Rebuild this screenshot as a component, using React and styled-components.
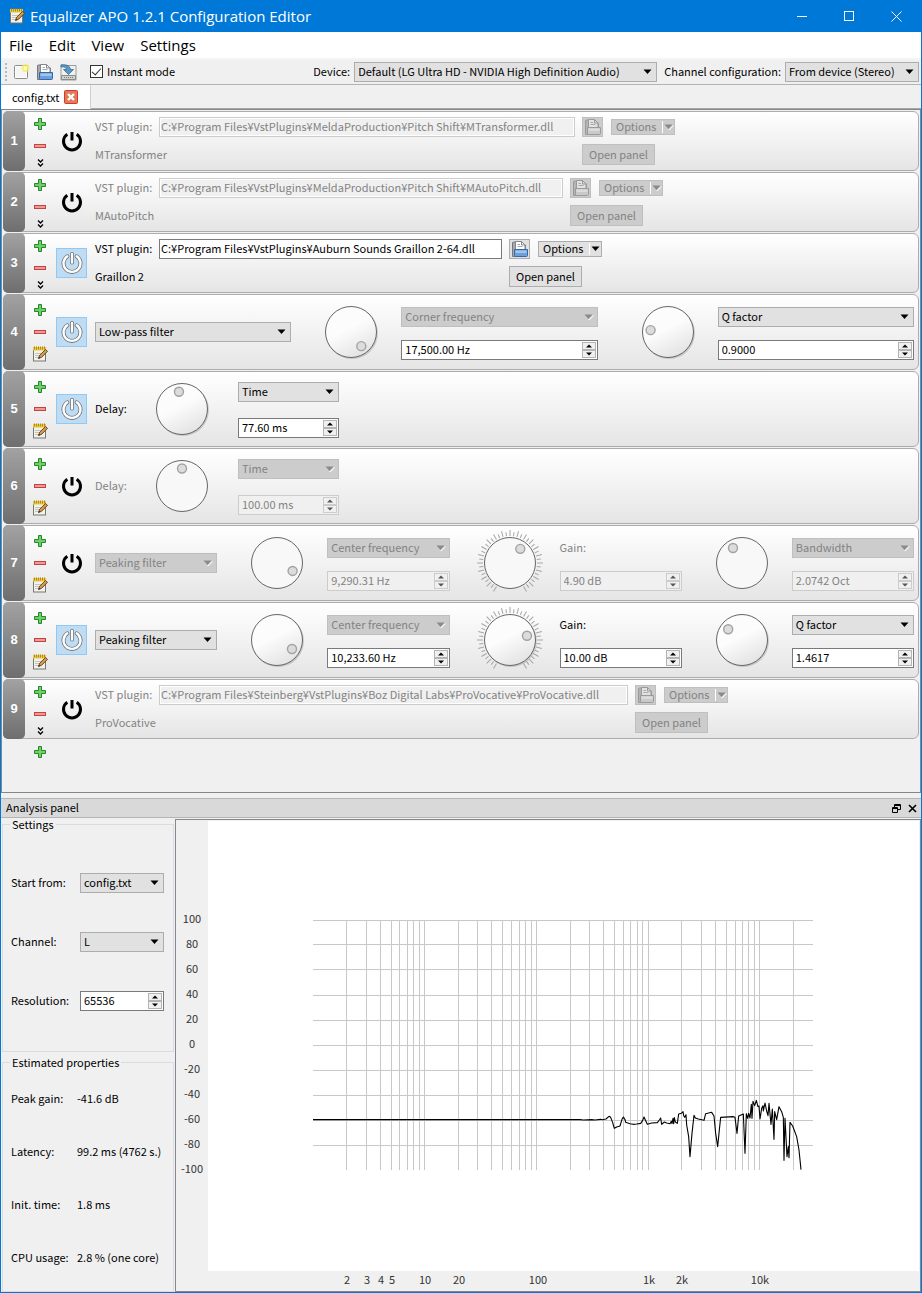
import { useId } from "react";
import styled, { createGlobalStyle } from "styled-components";

const filters = [
  { id: 1, type: "vst", path: "C:¥Program Files¥VstPlugins¥MeldaProduction¥Pitch Shift¥MTransformer.dll", name: "MTransformer", width: 416 },
  { id: 2, type: "vst", path: "C:¥Program Files¥VstPlugins¥MeldaProduction¥Pitch Shift¥MAutoPitch.dll", name: "MAutoPitch", width: 404 },
  { id: 3, type: "vst", path: "C:¥Program Files¥VstPlugins¥Auburn Sounds Graillon 2-64.dll", name: "Graillon 2", width: 343, on: true },
  {
    id: 4, type: "biquad", filter: "Low-pass filter", on: true,
    params: [
      { angle: 144, mode: "Corner frequency", modeOff: true, value: "17,500.00 Hz" },
      { angle: -84, mode: "Q factor", value: "0.9000", wide: true },
    ],
  },
  { id: 5, type: "delay", angle: -10, value: "77.60 ms", on: true },
  { id: 6, type: "delay", angle: 0, value: "100.00 ms" },
  {
    id: 7, type: "biquad", filter: "Peaking filter",
    params: [
      { angle: 117, mode: "Center frequency", value: "9,290.31 Hz" },
      { angle: 36, label: "Gain:", value: "4.90 dB", ticks: true },
      { angle: -31, mode: "Bandwidth", value: "2.0742 Oct" },
    ],
  },
  {
    id: 8, type: "biquad", filter: "Peaking filter", on: true,
    params: [
      { angle: 121, mode: "Center frequency", modeOff: true, value: "10,233.60 Hz" },
      { angle: 76, label: "Gain:", value: "10.00 dB", ticks: true },
      { angle: -52, mode: "Q factor", value: "1.4617" },
    ],
  },
  { id: 9, type: "vst", path: "C:¥Program Files¥Steinberg¥VstPlugins¥Boz Digital Labs¥ProVocative¥ProVocative.dll", name: "ProVocative", width: 469 },
];

const properties = [
  ["Peak gain:", "-41.6 dB"],
  ["Latency:", "99.2 ms (4762 s.)"],
  ["Init. time:", "1.8 ms"],
  ["CPU usage:", "2.8 % (one core)"],
];

/* icons */

const NotepadIcon = () => (
  <svg width="16" height="16" viewBox="0 0 16 16">
    <rect x="1.5" y="2.5" width="12" height="12.5" fill="#f1f1ee" stroke="#77776f" />
    <path d="M3 7.5h7M3 9.5h6M3 11.5h5" stroke="#c4c4bf" />
    <rect x="1" y="1" width="13" height="3.5" fill="#ecca45" />
    <path d="M2.5 0.5v3M4.5 0.5v3M6.5 0.5v3M8.5 0.5v3M10.5 0.5v3M12.5 0.5v3" stroke="#b5891a" />
    <path d="M6.500 12.500l1.200-3.300 5.800-5.700 2 1.800-5.800 5.900z" fill="#d89a4c" stroke="#5c3a12" strokeWidth="0.900" />
    <path d="M6.500 12.500l0.500-1.600 1.200 1z" fill="#222" />
  </svg>
);

const NewIcon = () => (
  <svg width="17" height="16" viewBox="0 0 17 16">
    <rect x="1.5" y="1.500" width="13" height="13" rx="1" fill="#f5f5f5" stroke="#8c8c8a" />
    <path d="M2.500 2.500h11v11h-11z" fill="none" stroke="#fff" />
    <circle cx="12.500" cy="4" r="4" fill="#f6ee5c" opacity="0.75" />
    <circle cx="12.500" cy="4" r="2" fill="#fdfbb0" />
  </svg>
);

const OpenIcon = ({ off }) => (
  <svg width="18" height="18" viewBox="0 0 18 18">
    <path d="M1.500 16.500V3q0-1 1-1h3v3h9v11.500z" fill={off ? "#b4b4b4" : "#a6a9ad"} stroke={off ? "#9a9a9a" : "#74787c"} />
    <path d="M4.500 11V1.500h6l3.500 3.500V11z" fill={off ? "#e2e2e2" : "#fff"} stroke={off ? "#999" : "#85878a"} />
    <path d="M10.500 1.500V5H14" fill="none" stroke={off ? "#999" : "#85878a"} />
    <path d="M6.500 4.500h2.500M6.500 6.500h5" stroke="#a9a9a9" />
    <path d="M3.500 9.500h13v6q0 1-1 1h-11q-1 0-1-1z" fill={off ? "#c9c9c9" : "#6d9fdb"} stroke={off ? "#9a9a9a" : "#3568a8"} />
    <path d="M4.500 10.500h11v2.500h-11z" fill={off ? "#dcdcdc" : "#a3c5ec"} />
  </svg>
);

const SaveIcon = () => (
  <svg width="17" height="17" viewBox="0 0 17 17">
    <path d="M1 1.500h15v14.500H1z" fill="#f0f1ef" stroke="#9a9d9a" />
    <path d="M1.500 11.500h14v4h-14z" fill="#cfd1cd" stroke="#8a8d89" />
    <path d="M4 13.500h10" stroke="#7c7f7b" strokeDasharray="1 1" />
    <path d="M1 0.800C6 0.300 10 1.500 10.500 5.500h3L8.500 10.500 3.500 5.500H6.500C6 3.500 4.500 2.500 1 3z" fill="#5b97c2" stroke="#2a618e" strokeWidth="0.700" />
  </svg>
);

const PlusIcon = () => (
  <svg width="12" height="12" viewBox="0 0 12 12">
    <path d="M4.500 0.500h3v4h4v3h-4v4h-3v-4h-4v-3h4z" fill="#6fd06a" stroke="#27862a" />
  </svg>
);

const MinusIcon = () => (
  <svg width="12" height="4" viewBox="0 0 12 4">
    <rect x="0.500" y="0.500" width="11" height="3" fill="#f09a94" stroke="#c2433f" />
  </svg>
);

const ChevronsIcon = () => (
  <svg width="7" height="8" viewBox="0 0 7 8">
    <path d="M1 0.500l2.500 2.500L6 0.500M1 4.500l2.500 2.500L6 4.500" fill="none" stroke="#000" strokeWidth="1.300" />
  </svg>
);

const PowerIcon = ({ on }) => {
  const d = "M6.300 4.300a8.500 8.500 0 1 0 9.400 0M11 2v8.500";
  return (
    <svg width="22" height="22" viewBox="0 0 22 22" fill="none" strokeLinecap={on ? "round" : "butt"}>
      <path d={d} stroke={on ? "#6b7178" : "#000"} strokeWidth={on ? 4 : 3} />
      {on && <path d={d} stroke="#fff" strokeWidth="2.400" />}
    </svg>
  );
};

const CloseTabIcon = () => (
  <svg width="14" height="14" viewBox="0 0 14 14">
    <rect x="0.500" y="0.500" width="13" height="13" rx="1" fill="#e07b5a" stroke="#d4372b" />
    <path d="M4 4l6 6M10 4l-6 6" stroke="#fff" strokeWidth="2.400" />
  </svg>
);

const Arrow = ({ off }) => (
  <svg width="10" height="6" viewBox="0 0 10 6">
    {off && <path d="M4 6h1.500l4-4v-1z" fill="#fff" />}
    <path d="M0.500 0.500h8l-4 4.500z" fill={off ? "#8a8a8a" : "#000"} />
  </svg>
);

/* controls */

const Combo = ({ value, label, disabled, width, id }) => (
  <ComboBox $width={width}>
    <ComboSelect id={id} aria-label={label} disabled={disabled} defaultValue={value}>
      <option>{value}</option>
    </ComboSelect>
    <Arrow off={disabled} />
  </ComboBox>
);

const Spin = ({ value, label, disabled, id }) => (
  <SpinBox $off={disabled}>
    <SpinInput id={id} aria-label={label} defaultValue={value} disabled={disabled} />
    <SpinButtons>
      <SpinButton aria-label="Increase" disabled={disabled}>
        <svg width="6" height="4" viewBox="0 0 6 4"><path d="M0 3.500h6L3 0.500z" fill="currentColor" /></svg>
      </SpinButton>
      <SpinButton aria-label="Decrease" disabled={disabled}>
        <svg width="6" height="4" viewBox="0 0 6 4"><path d="M0 0.500h6L3 3.500z" fill="currentColor" /></svg>
      </SpinButton>
    </SpinButtons>
  </SpinBox>
);

const Dial = ({ angle, ticks, disabled, label, wide }) => {
  const gradient = useId();
  const rad = (angle * Math.PI) / 180;
  const marks = [];
  if (ticks) for (let a = -150; a <= 150; a += 7.5) marks.push(a);

  return (
    <DialBox $wide={wide}>
      <svg width="70" height="70" viewBox="0 0 70 70">
        <linearGradient id={gradient} x1="0.200" y1="0" x2="0.700" y2="1">
          <stop offset="0.450" stopColor="#fcfcfc" />
          <stop offset="1" stopColor="#e2e2e2" />
        </linearGradient>
        {marks.map((a, i) => (
          <path key={a} d={i % 2 ? "M35 4v4" : "M35 2v6"} stroke="#a6a6a6" transform={`rotate(${a} 35 35)`} />
        ))}
        {!disabled && <circle cx="36" cy="36" r="26" fill="#000" opacity="0.150" />}
        <circle cx="35" cy="35" r="25.500" fill={disabled ? "#f8f8f8" : `url(#${gradient})`} stroke="#666" />
        <circle
          cx={35 + 17.5 * Math.sin(rad)}
          cy={35 - 17.5 * Math.cos(rad)}
          r="4.500"
          fill="#dcdcdc"
          stroke="#a2a2a2"
          strokeWidth="1.400"
        />
      </svg>
      <DialRange type="range" min="-150" max="150" defaultValue={angle} aria-label={label} disabled={disabled} />
    </DialBox>
  );
};

/* filter rows */

const VstFilter = ({ path, name, width, on, id }) => (
  <VstGrid $off={!on}>
    <label htmlFor={`path-${id}`}>VST plugin:</label>
    <PathInput id={`path-${id}`} defaultValue={path} disabled={!on} $width={width} />
    <VstButtons>
      <FileButton aria-label="Open file" disabled={!on}><OpenIcon off={!on} /></FileButton>
      <OptionsButton disabled={!on}>
        <OptionsText>Options</OptionsText>
        <Divider />
        <Arrow off={!on} />
      </OptionsButton>
    </VstButtons>
    <PluginName>{name}</PluginName>
    <PanelButton disabled={!on}>Open panel</PanelButton>
  </VstGrid>
);

const BiquadFilter = ({ filter, params, on }) => (
  <>
    <Combo value={filter} label="Filter type" disabled={!on} />
    {params.map((p) => (
      <Param key={p.mode || p.label}>
        <Dial angle={p.angle} ticks={p.ticks} wide={p.wide} disabled={!on} label={p.mode || p.label} />
        <ParamFields>
          {p.label
            ? <ParamLabel $off={!on}>{p.label}</ParamLabel>
            : <Combo value={p.mode} label="Parameter" disabled={!on || p.modeOff} />}
          <Spin value={p.value} label={p.mode || p.label} disabled={!on} />
        </ParamFields>
      </Param>
    ))}
  </>
);

const DelayFilter = ({ angle, value, on }) => (
  <>
    <DelayLabel $off={!on}>Delay:</DelayLabel>
    <Dial angle={angle} disabled={!on} label="Delay" />
    <DelayFields>
      <Combo value="Time" label="Unit" disabled={!on} />
      <Spin value={value} label="Delay" disabled={!on} />
    </DelayFields>
  </>
);

const views = { vst: VstFilter, biquad: BiquadFilter, delay: DelayFilter };

const FilterRow = (props) => {
  const View = views[props.type];
  const tall = props.type !== "vst";

  return <Row $tall={tall}>
    <RowNumber>{props.id}</RowNumber>
    <RowTools $tall={tall}>
      <IconButton aria-label="Add filter"><PlusIcon /></IconButton>
      <IconButton aria-label="Remove filter"><MinusIcon /></IconButton>
      <IconButton aria-label={tall ? "Edit text" : "Expand"}>
        {tall ? <NotepadIcon /> : <ChevronsIcon />}
      </IconButton>
    </RowTools>
    <PowerButton aria-label="Power" aria-pressed={!!props.on} $on={props.on}>
      <PowerIcon on={props.on} />
    </PowerButton>
    <RowBody><View {...props} /></RowBody>
  </Row>
};

/* analysis graph */

const gridX = [];
for (let decade = 1; decade <= 10000; decade *= 10) {
  for (let n = 1; n < 10; n++) {
    const f = n * decade;
    if (f > 1 && f <= 20000) gridX.push(Math.floor(136 + 111.7 * Math.log10(f)));
  }
}
const gridY = [99, 123, 148, 174, 199, 224, 249, 274, 299, 324];
const dbLabels = [100, 80, 60, 40, 20, 0, -20, -40, -60, -80, -100];
const hzLabels = [
  [170, "2"], [190, "3"], [204, "4"], [215, "5"], [248, "10"], [282, "20"],
  [361, "100"], [472, "1k"], [505, "2k"], [583, "10k"],
];

const response = "-771,119 30,119 40,120 65,119 75,120 92,118 97,119 108,117 117,109 122,112 128,128 133,145 140,141 150,138 156,118 160,111 165,119 167,127 180,131 190,133 200,132 212,130 218,121 222,111 226,120 232,133 245,129 262,128 268,120 272,114 275,133 283,126 290,129 300,131 304,124 306,131 309,115 311,131 313,113 316,126 322,130 326,102 334,100 339,95 341,107 344,112 348,104 350,135 356,170 360,230 366,160 372,106 376,114 385,117 402,121 407,101 425,97 432,108 437,160 443,200 448,150 452,112 490,110 495,112 501,160 506,108 515,104 520,102 525,220 529,101 533,115 536,100 540,114 544,73 546,115 549,64 554,77 559,61 564,80 567,78 570,117 575,85 579,77 580,93 585,69 590,93 594,107 597,70 603,133 607,87 612,178 614,95 620,119 627,80 635,95 640,112 642,241 645,115 651,230 655,200 657,233 660,127 668,138 680,170 687,210 693,269";

const Graph = () => (
  <GraphView>
    <GraphSvg role="img" aria-label="Frequency response">
      <g stroke="#c8c8c8" shapeRendering="crispEdges">
        {gridX.map((x) => <path key={x} d={`M${x + 0.5} 99V349`} />)}
        {gridY.map((y) => <path key={y} d={`M136 ${y + 0.5}H636`} />)}
      </g>
      <g transform="translate(393 259) scale(0.33333)">
        <polyline points={response} fill="none" stroke="#000" strokeWidth="3.300" strokeLinejoin="round" />
      </g>
      {dbLabels.map((db, i) => (
        <text key={db} x="15" y={102 + i * 25} textAnchor="middle">{db}</text>
      ))}
      {hzLabels.map(([x, text]) => (
        <text key={text} x={x} y="463" textAnchor="middle">{text}</text>
      ))}
    </GraphSvg>
  </GraphView>
);

export default function App() {
  return <Window>
    <GlobalStyle />
    <TitleBar>
      <NotepadIcon />
      <Title>Equalizer APO 1.2.1 Configuration Editor</Title>
      <WindowButton aria-label="Minimize">
        <svg width="11" height="11"><path d="M0 5.500h10" stroke="#fff" /></svg>
      </WindowButton>
      <WindowButton aria-label="Maximize">
        <svg width="11" height="11"><rect x="0.500" y="0.500" width="9" height="9" fill="none" stroke="#fff" /></svg>
      </WindowButton>
      <WindowButton aria-label="Close">
        <svg width="11" height="11"><path d="M0.500 0.500l10 10M10.500 0.500l-10 10" stroke="#fff" /></svg>
      </WindowButton>
    </TitleBar>

    <MenuBar>
      <MenuItem>File</MenuItem>
      <MenuItem>Edit</MenuItem>
      <MenuItem>View</MenuItem>
      <MenuItem>Settings</MenuItem>
    </MenuBar>

    <ToolBar>
      <Grip />
      <IconButton aria-label="New"><NewIcon /></IconButton>
      <IconButton aria-label="Open"><OpenIcon /></IconButton>
      <IconButton aria-label="Save"><SaveIcon /></IconButton>
      <CheckLabel>
        <CheckBox type="checkbox" defaultChecked />
        Instant mode
      </CheckLabel>
      <ToolLabel htmlFor="device">Device:</ToolLabel>
      <Combo id="device" width={303} value="Default (LG Ultra HD - NVIDIA High Definition Audio)" />
      <ToolLabel htmlFor="channels">Channel configuration:</ToolLabel>
      <Combo id="channels" width={134} value="From device (Stereo)" />
    </ToolBar>

    <TabBar>
      <Tab>
        config.txt
        <IconButton aria-label="Close tab"><CloseTabIcon /></IconButton>
      </Tab>
      <TabFill />
    </TabBar>

    <FilterList>
      {filters.map((f) => <FilterRow key={f.id} {...f} />)}
      <AddRow><IconButton aria-label="Add filter"><PlusIcon /></IconButton></AddRow>
    </FilterList>

    <DockTitle>
      <span>Analysis panel</span>
      <IconButton aria-label="Float">
        <svg width="9" height="9" fill="none" stroke="#000"><path d="M2.500 3V0.500h6v5H6M2 1.500h7" /><path d="M0.500 3.500h5v5h-5zM0 4.500h6" /></svg>
      </IconButton>
      <IconButton aria-label="Close">
        <svg width="9" height="9"><path d="M1 1l7 7M8 1l-7 7" stroke="#000" strokeWidth="1.600" /></svg>
      </IconButton>
    </DockTitle>

    <Dock>
      <SidePanel>
        <SettingsGroup>
          <legend>Settings</legend>
          <label htmlFor="start">Start from:</label>
          <Combo id="start" value="config.txt" />
          <label htmlFor="channel">Channel:</label>
          <Combo id="channel" value="L" />
          <label htmlFor="resolution">Resolution:</label>
          <Spin id="resolution" value="65536" />
        </SettingsGroup>
        <PropertiesGroup>
          <legend>Estimated properties</legend>
          {properties.map(([label, value]) => [
            <span key={label}>{label}</span>,
            <output key={value}>{value}</output>,
          ])}
        </PropertiesGroup>
      </SidePanel>
      <Graph />
    </Dock>
  </Window>
}

const GlobalStyle = createGlobalStyle`
  * {
    box-sizing: border-box;
  }
  body {
    margin: 0;
    background: #f0f0f0;
    font: 11px/16px "Noto Sans CJK JP", "MS UI Gothic", sans-serif;
    color: #000;
  }
  button, input, select {
    font: inherit;
    color: inherit;
    margin: 0;
    border-radius: 0;
  }
  button {
    padding: 0;
  }
  label {
    padding-bottom: 2px;
    white-space: nowrap;
  }
  svg {
    display: block;
    flex: none;
  }
`;

const Window = styled.div`
  display: flex;
  flex-direction: column;
  min-height: 100vh;
  border: 1px solid #0078d7;
  border-top: 0;
`;

const TitleBar = styled.header`
  display: flex;
  align-items: center;
  height: 32px;
  padding: 0 1px 0 8px;
  background: #0078d7;
  color: #fff;
`;

const Title = styled.h1`
  flex: 1;
  margin: 0 0 0 5px;
  font: 15px/20px "Open Sans", "Segoe UI", sans-serif;
`;

const WindowButton = styled.button`
  display: grid;
  place-items: center;
  width: 47px;
  height: 32px;
  border: 0;
  background: none;
`;

const MenuBar = styled.nav`
  display: flex;
  height: 28px;
  border-bottom: 2px solid #f4f4f4;
  background: #fff;
`;

const MenuItem = styled.button`
  padding: 0 8px;
  border: 0;
  background: none;
  font: 15px/26px "Open Sans", "Segoe UI", sans-serif;
`;

const ToolBar = styled.div`
  display: flex;
  align-items: center;
  height: 25px;
  padding: 0 2px 0 4px;
  gap: 6px;
  border-bottom: 1px solid #b4b4b4;
`;

const Grip = styled.span`
  width: 2px;
  height: 18px;
  background: repeating-linear-gradient(#b8b8b8 0 2px, transparent 2px 4px);
`;

const IconButton = styled.button`
  display: grid;
  place-items: center;
  border: 0;
  background: none;
`;

const CheckLabel = styled.label`
  display: flex;
  align-items: center;
  gap: 4px;
  margin: 0 auto 0 7px;
`;

const CheckBox = styled.input`
  appearance: none;
  width: 13px;
  height: 13px;
  border: 1px solid #333;
  background: #fff;

  &:checked::after {
    content: "";
    display: block;
    width: 8px;
    height: 4px;
    margin: 2px 1px;
    border: solid #333;
    border-width: 0 0 1px 1px;
    transform: rotate(-48deg);
  }
`;

const ToolLabel = styled.label`
  margin: 0 -2px 0 1px;
`;

const ComboBox = styled.div`
  display: grid;
  flex: ${({ $width }) => ($width ? "none" : "1")};
  width: ${({ $width }) => ($width ? `${$width}px` : "auto")};
  min-width: 0;
  height: 20px;
  align-items: center;

  > * {
    grid-area: 1 / 1;
  }
  > svg {
    justify-self: end;
    margin-right: 4px;
    pointer-events: none;
  }
`;

const ComboSelect = styled.select`
  appearance: none;
  width: 100%;
  height: 20px;
  padding: 0 16px 2px 3px;
  border: 1px solid #adadad;
  background: #e1e1e1;
  opacity: 1;

  &:disabled {
    border-color: #bfbfbf;
    background: #ccc;
    color: #838383;
  }
`;

const SpinBox = styled.div`
  display: flex;
  flex: 1;
  min-width: 0;
  height: 20px;
  padding: 1px;
  border: 1px solid ${({ $off }) => ($off ? "#ccc" : "#7a7a7a")};
  background: ${({ $off }) => ($off ? "#f0f0f0" : "#fff")};
`;

const SpinInput = styled.input`
  flex: 1;
  width: 0;
  padding: 0 0 2px 2px;
  border: 0;
  background: none;

  &:disabled {
    color: #838383;
  }
`;

const SpinButtons = styled.div`
  display: flex;
  flex-direction: column;
  width: 14px;
`;

const SpinButton = styled.button`
  display: grid;
  place-items: center;
  height: 8px;
  border: 1px solid #b4b4b4;
  background: #f0f0f0;

  &:disabled {
    border-color: #ccc;
    color: #555;
  }
`;

const TabBar = styled.div`
  display: flex;
  height: 25px;
  border-bottom: 1px solid #828790;
`;

const Tab = styled.div`
  display: flex;
  align-items: center;
  gap: 5px;
  padding: 0 12px 0 11px;
  border-right: 1px solid #d0d0d0;
  background: #fff;
`;

const TabFill = styled.div`
  flex: 1;
  border-bottom: 1px solid #a6a6a6;
`;

const FilterList = styled.main`
  display: flex;
  flex: 1;
  flex-direction: column;
  gap: 1px;
  padding: 1px;
  border: solid #828790;
  border-width: 0 1px 1px 1px;
`;

const Row = styled.section`
  display: flex;
  align-items: center;
  height: ${({ $tall }) => ($tall ? 76 : 60)}px;
  border: 1px solid #acacac;
  border-radius: 6px;
  background: linear-gradient(#fff, #e5e5e5);
`;

const RowNumber = styled.span`
  display: grid;
  place-items: center;
  align-self: stretch;
  width: 22px;
  margin: -1px 0 -1px -1px;
  border-radius: 5px;
  background: linear-gradient(#a2a2a2, #6e6e6e);
  color: #fff;
  font: bold 13px/16px "Liberation Sans", Arial, sans-serif;
`;

const RowTools = styled.div`
  display: grid;
  grid-template-rows: 22px 22px ${({ $tall }) => ($tall ? 22 : 12)}px;
  width: 30px;
`;

const PowerButton = styled.button`
  display: grid;
  place-items: center;
  width: 31px;
  height: 30px;
  margin-left: 1px;
  border: 1px solid ${({ $on }) => ($on ? "#90c8f6" : "transparent")};
  background: ${({ $on }) => ($on ? "#c0dcf3" : "none")};
`;

const RowBody = styled.div`
  display: flex;
  flex: 1;
  align-items: center;
  min-width: 0;
  padding: 0 4px 0 8px;
`;

const VstGrid = styled.div`
  display: grid;
  grid-template-columns: 57px auto auto;
  grid-template-rows: 20px 22px;
  gap: 7px;
  align-items: center;
  color: ${({ $off }) => ($off ? "#838383" : "#000")};
`;

const PathInput = styled.input`
  width: ${({ $width }) => $width}px;
  height: 20px;
  padding: 0 1px 2px;
  border: 1px solid #7a7a7a;
  background: #fff;

  &:disabled {
    border-color: #ccc;
    background: #f0f0f0;
    box-shadow: inset 0 0 0 1px #fff;
  }
`;

const VstButtons = styled.div`
  display: flex;
  align-items: center;
  gap: 8px;
`;

const PushButton = styled.button`
  border: 1px solid #adadad;
  background: #e1e1e1;

  &:disabled {
    border-color: #bfbfbf;
    background: #ccc;
    color: #838383;
  }
`;

const FileButton = styled(PushButton)`
  display: grid;
  place-items: center;
  width: 21px;
  height: 20px;
`;

const OptionsButton = styled(PushButton)`
  display: flex;
  align-items: center;
  width: 64px;
  height: 16px;
  padding: 0 0 0 4px;
`;

const OptionsText = styled.span`
  padding-bottom: 2px;
`;

const Divider = styled.i`
  width: 1px;
  height: 12px;
  margin-left: auto;
  margin-right: 1px;
  background: #fff;
`;

const PanelButton = styled(PushButton)`
  width: 73px;
  height: 21px;
  padding-bottom: 2px;
`;

const PluginName = styled.span`
  grid-column: span 2;
  padding-bottom: 2px;
`;

const Param = styled.div`
  display: contents;
`;

const DialBox = styled.div`
  position: relative;
  flex: none;
  display: grid;
  place-items: center;
  width: 100px;
  margin-left: ${({ $wide }) => ($wide ? 20 : 10)}px;
`;

const DialRange = styled.input`
  position: absolute;
  inset: 9px 24px;
  opacity: 0;
`;

const ParamFields = styled.div`
  display: grid;
  flex: 1;
  gap: 13px;
  min-width: 0;
  padding-top: 2px;
`;

const ParamLabel = styled.span`
  padding-bottom: 2px;
  line-height: 18px;
  color: ${({ $off }) => ($off ? "#838383" : "#000")};
`;

const DelayLabel = styled.span`
  width: 27px;
  padding-bottom: 2px;
  white-space: nowrap;
  color: ${({ $off }) => ($off ? "#838383" : "#000")};
`;

const DelayFields = styled.div`
  display: grid;
  gap: 16px;
  width: 101px;
  margin-left: 6px;
  padding-top: 2px;
`;

const AddRow = styled.div`
  display: flex;
  padding: 6px 31px;
`;

const DockTitle = styled.div`
  display: flex;
  align-items: center;
  gap: 7px;
  height: 20px;
  margin-top: 5px;
  padding: 0 4px 0 5px;
  border: solid #b4b4b4;
  border-width: 1px 0;
  background: #d9d9d9;

  span {
    flex: 1;
    padding-bottom: 2px;
  }
`;

const Dock = styled.div`
  display: grid;
  grid-template-columns: 172px 1fr;
  gap: 1px;
  padding-left: 1px;
`;

const SidePanel = styled.aside`
  display: grid;
  gap: 4px;
`;

const Group = styled.fieldset`
  display: grid;
  align-items: center;
  min-width: 0;
  margin: 0;
  border: 1px solid #dcdcdc;

  legend {
    margin-left: -1px;
    padding: 0 2px;
    line-height: 12px;
  }
`;

const SettingsGroup = styled(Group)`
  grid-template-columns: 69px 84px;
  grid-auto-rows: 59px;
  padding: 23px 8px 21px;
`;

const PropertiesGroup = styled(Group)`
  grid-template-columns: 66px 1fr;
  grid-auto-rows: 53px;
  padding: 3px 0 8px 8px;
`;

const GraphView = styled.div`
  display: grid;
  grid-template: 1fr 20px / 31px 1fr;
  margin-top: 1px;
  border: 1px solid #828790;
  background: #f0f0f0;
  padding: 1px 1px 0 1px;

  &::before {
    content: "";
    grid-area: 1 / 2;
    background: #fff;
  }
`;

const GraphSvg = styled.svg`
  grid-area: 1 / 1 / 3 / 3;
  width: 100%;
  height: 100%;
  fill: #333;
`;
